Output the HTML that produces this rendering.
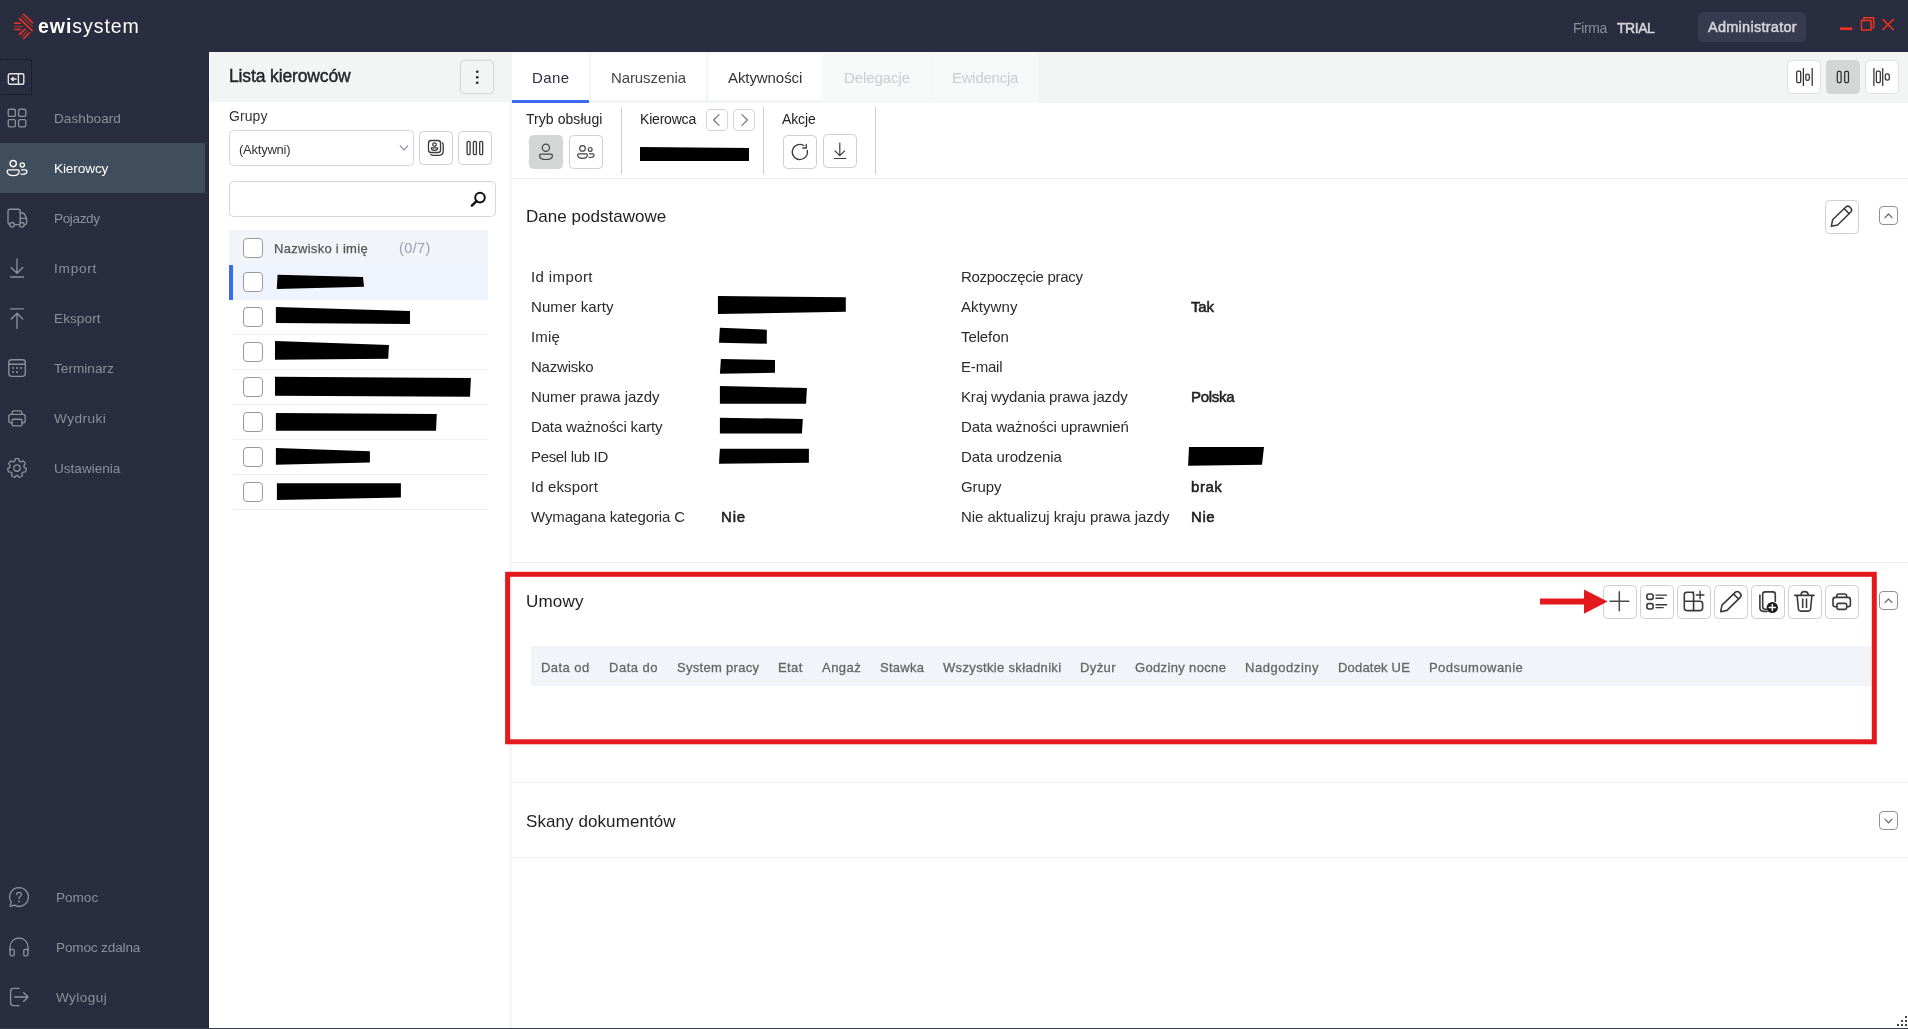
<!DOCTYPE html>
<html lang="pl">
<head>
<meta charset="utf-8">
<title>ewisystem</title>
<style>
*{box-sizing:border-box;margin:0;padding:0}
html,body{width:1908px;height:1029px;overflow:hidden;background:#fff}
body{font-family:"Liberation Sans",sans-serif;font-size:14px;color:#222;position:relative;will-change:transform}
.abs{position:absolute}
svg{display:block;overflow:visible}
#topbar{position:absolute;left:0;top:0;width:1908px;height:52px;background:#2a2c3f}
#sidebar{position:absolute;left:0;top:52px;width:209px;height:977px;background:#2a2c3f}
.nav{position:absolute;left:0;width:205px;height:50px;color:#8d8f9b;font-size:13.6px}
.nav.active{background:#3f4d5c;color:#fff}
.nav span{position:absolute;left:54px;top:0.7px;line-height:50px;white-space:nowrap}
.nav svg{position:absolute;left:5px;top:13px;width:24px;height:24px;fill:none;stroke:currentColor;stroke-width:1.35;stroke-linecap:round;stroke-linejoin:round}
.nav.b span{left:56px}
.btn{position:absolute;border:1px solid #cfcfcf;border-radius:4.5px;background:#fff}
.btn.sel{background:#d4d6d6;border-color:#d4d6d6}
.btn svg{position:absolute;left:-1px;top:-1px;width:calc(100% + 2px);height:calc(100% + 2px);fill:none;stroke:#3a3a3a;stroke-width:1.4;stroke-linecap:round;stroke-linejoin:round}
.t{position:absolute;white-space:nowrap;line-height:20px}
.hl{position:absolute;height:1px;background:#efefef}
.vl{position:absolute;width:1px;background:#efefef}
.cb{position:absolute;width:20px;height:20px;border:1px solid #9a9a9a;border-radius:4px;background:#fff}
.lab{position:absolute;white-space:nowrap;font-size:15px;line-height:20px;color:#2b2b2b}
.val{position:absolute;white-space:nowrap;font-size:15px;line-height:20px;color:#222;-webkit-text-stroke:0.55px #222}
.sb{-webkit-text-stroke:0.5px currentColor}
.th{position:absolute;white-space:nowrap;font-size:13px;line-height:20px;color:#666;top:657.5px;-webkit-text-stroke:0.3px #666}
</style>
</head>
<body>
<!-- TOPBAR -->
<div id="topbar">
  <svg class="abs" style="left:0;top:0" width="60" height="52" viewBox="0 0 60 52" fill="none" stroke-width="1.55" stroke-linecap="round">
    <g stroke="#f0321e">
      <path d="M19.5 18.6 L32.1 30.6"/><path d="M23.6 14.3 L32.4 22.6"/>
      <path d="M19.4 34.4 L25.2 29"/><path d="M23.8 38.4 L29.6 32.8"/>
      <path d="M14.7 23.3 H20.3"/><path d="M14.7 29.4 H20.3"/>
    </g>
    <g stroke="#96302a">
      <path d="M21.6 16.2 L32.4 26.5"/><path d="M21.8 36.4 L27.4 31"/><path d="M14.7 26.4 H22.7"/>
    </g>
  </svg>
  <div class="t" style="left:38px;top:11.8px;font-size:19.5px;line-height:28px;color:#fff;letter-spacing:0.95px"><b>ewi</b>system</div>
  <div class="t" style="left:1573px;top:18px;color:#8b8d97;font-size:14px;letter-spacing:-0.37px">Firma</div>
  <div class="t" style="left:1617px;top:18px;color:#d4d4d9;font-size:14px;-webkit-text-stroke:0.5px #d4d4d9;letter-spacing:-0.47px">TRIAL</div>
  <div class="abs" style="left:1698px;top:12px;width:108px;height:30px;border-radius:5px;background:#383b4f"></div>
  <div class="t" style="left:1708px;top:17px;color:#d4d4d9;font-size:14.5px;-webkit-text-stroke:0.5px #d4d4d9;letter-spacing:0.27px">Administrator</div>
  <svg class="abs" style="left:1838px;top:14px" width="60" height="20" viewBox="1838 14 60 20" fill="none" stroke="#f0321e" stroke-width="1.5">
    <path d="M1840 28.7 H1852.3" stroke-width="2.6"/>
    <path d="M1861.5 20.5 H1871 V30 H1861.5 Z"/><path d="M1864 20.5 V17.8 H1873.7 V27.5 H1871"/>
    <path d="M1882.5 19 L1893.7 30 M1893.7 19 L1882.5 30" stroke-width="1.7"/>
  </svg>
</div>
<!-- SIDEBAR -->
<div id="sidebar">
  <svg class="abs" style="left:0;top:0" width="40" height="50" viewBox="0 0 40 50" fill="none" stroke="#12131c" stroke-width="1" stroke-dasharray="1.5 1.45"><path d="M0 7.5 H31.5 V42.5 H0"/></svg>
  <svg class="abs" style="left:7px;top:21px" width="18" height="13" viewBox="0 0 18 13" fill="none" stroke="#e6e6ea" stroke-width="1.4">
    <rect x="1.3" y="0.7" width="15.5" height="10.6" rx="1.5"/><path d="M11.4 0.7 V11.3"/><path d="M9.6 6 H4.8 M6.6 4 L4.4 6 L6.6 8" stroke-width="1.5"/>
  </svg>
  <div class="nav" style="top:41px"><svg viewBox="0 0 24 24"><rect x="3.2" y="3.2" width="7.2" height="7.2" rx="1.5"/><rect x="13.6" y="3.2" width="7.2" height="7.2" rx="1.5"/><rect x="3.2" y="13.6" width="7.2" height="7.2" rx="1.5"/><rect x="13.6" y="13.6" width="7.2" height="7.2" rx="1.5"/></svg><span style="letter-spacing:0.05px">Dashboard</span></div>
  <div class="nav active" style="top:91px"><svg viewBox="0 0 24 24"><circle cx="8.2" cy="7.6" r="3.1"/><path d="M2.2 15.2 Q2.2 13.8 3.6 13.8 H12.8 Q14.2 13.8 14.2 15.2 Q14.2 19.6 8.2 19.6 Q2.2 19.6 2.2 15.2 Z"/><circle cx="17.3" cy="9" r="2.1"/><path d="M16.6 13.8 H20.6 Q21.9 13.8 21.9 15 Q21.9 18.3 17.6 18.3 Q16.6 18.3 15.9 18"/></svg><span style="letter-spacing:-0.11px">Kierowcy</span></div>
  <div class="nav" style="top:141px"><svg viewBox="0 0 24 24"><path d="M15.2 16.8 V5.2 Q15.2 3.2 13.2 3.2 H5 Q3 3.2 3 5.2 V16.6 Q3 18.4 4.6 18.6"/><path d="M9.6 18.6 H13.6"/><path d="M15.2 7 H17.6 Q19 7 19.6 8.4 L21.6 12.6 V16.8 Q21.6 18.4 20 18.6"/><path d="M15.4 12.4 H21.4"/><circle cx="7.1" cy="18.8" r="2.3"/><circle cx="16.9" cy="18.8" r="2.3"/></svg><span style="letter-spacing:-0.38px">Pojazdy</span></div>
  <div class="nav" style="top:191px"><svg viewBox="0 0 24 24"><path d="M12 2.8 V17 M6.2 11.4 L12 17.2 L17.8 11.4 M5.6 21 H18.4"/></svg><span style="letter-spacing:0.77px">Import</span></div>
  <div class="nav" style="top:241px"><svg viewBox="0 0 24 24"><path d="M12 22.4 V7.4 M6.2 13 L12 7.2 L17.8 13 M5.6 2.8 H18.4"/></svg><span style="letter-spacing:0.07px">Eksport</span></div>
  <div class="nav" style="top:291px"><svg viewBox="0 0 24 24"><rect x="3.8" y="3.7" width="16.5" height="16.6" rx="2.8"/><path d="M3.8 8.2 H20.3"/><g fill="currentColor" stroke="none"><circle cx="8" cy="12" r="1.1"/><circle cx="12" cy="12" r="1.1"/><circle cx="16" cy="12" r="1.1"/><circle cx="8" cy="16" r="1.1"/><circle cx="12" cy="16" r="1.1"/></g></svg><span style="letter-spacing:0.02px">Terminarz</span></div>
  <div class="nav" style="top:341px"><svg viewBox="0 0 24 24"><path d="M7.2 8.4 V6.6 Q7.2 4.8 9 4.8 H15 Q16.8 4.8 16.8 6.6 V8.4"/><path d="M7 16.8 H5.8 Q3.8 16.8 3.8 14.8 V10.6 Q3.8 8.4 6 8.4 H18 Q20.2 8.4 20.2 10.6 V14.8 Q20.2 16.8 18.2 16.8 H17"/><rect x="7" y="13.2" width="10" height="6.6" rx="1.5"/></svg><span style="letter-spacing:0.45px">Wydruki</span></div>
  <div class="nav" style="top:391px"><svg viewBox="0 0 24 24"><circle cx="12" cy="12" r="3.2"/><path d="M10.3 2.6 H13.7 L14.3 5.1 L15.9 5.9 L18.3 4.9 L20.4 7.6 L18.9 9.7 L19.2 11.4 L21.4 12.6 L20.6 15.9 L18 16.1 L16.9 17.5 L17.4 20 L14.3 21.5 L12.7 19.5 H11.3 L9.7 21.5 L6.6 20 L7.1 17.5 L6 16.1 L3.4 15.9 L2.6 12.6 L4.8 11.4 L5.1 9.7 L3.6 7.6 L5.7 4.9 L8.1 5.9 L9.7 5.1 Z"/></svg><span style="letter-spacing:-0.01px">Ustawienia</span></div>
  <div class="nav b" style="top:820px"><svg style="left:7px" viewBox="0 0 24 24"><path d="M12 2.6 A9.4 9.4 0 1 1 7.4 20.2 L3 21.4 L4.2 17.2 A9.4 9.4 0 0 1 12 2.6 Z"/><path d="M9.6 9.6 Q9.6 7.4 12 7.4 Q14.4 7.4 14.4 9.4 Q14.4 10.8 13 11.6 Q12 12.2 12 13.6"/><circle cx="12" cy="16.4" r="0.9" fill="currentColor" stroke="none"/></svg><span style="letter-spacing:-0.03px">Pomoc</span></div>
  <div class="nav b" style="top:870px"><svg style="left:7px" viewBox="0 0 24 24"><path d="M3 15 V12 A9 9 0 0 1 21 12 V15"/><path d="M3 14.4 H6 Q7.2 14.4 7.2 15.6 V19.6 Q7.2 20.8 6 20.8 H5 Q3 20.8 3 18.8 Z"/><path d="M21 14.4 H18 Q16.8 14.4 16.8 15.6 V19.6 Q16.8 20.8 18 20.8 H19 Q21 20.8 21 18.8 Z"/></svg><span style="letter-spacing:-0.16px">Pomoc zdalna</span></div>
  <div class="nav b" style="top:920px"><svg style="left:7px" viewBox="0 0 24 24"><path d="M12 3.4 H6.4 Q3.6 3.4 3.6 6.2 V17.8 Q3.6 20.6 6.4 20.6 H12"/><path d="M7.6 12 H21 M16.6 7.6 L21 12 L16.6 16.4"/></svg><span style="letter-spacing:0.41px">Wyloguj</span></div>
</div>

<!-- LIST PANEL -->
<div class="vl" style="left:208px;top:52px;height:977px;background:#232538"></div>
<div class="abs" style="left:210px;top:52px;width:302px;height:50px;background:#f3f5f5"></div>
<div class="t" style="left:229px;top:64.2px;font-size:17.5px;line-height:24px;color:#26262b;-webkit-text-stroke:0.45px #26262b;letter-spacing:-0.13px">Lista kierowców</div>
<div class="btn" style="left:459.8px;top:59.8px;width:34.5px;height:34.5px;background:#f3f5f5;border-color:#d6d6d6;box-shadow:0 0 2px rgba(0,0,0,0.08)"><svg viewBox="0 0 34 34"><g fill="#222" stroke="none"><circle cx="17" cy="11.6" r="1.3"/><circle cx="17" cy="17" r="1.3"/><circle cx="17" cy="22.4" r="1.3"/></g></svg></div>
<div class="t" style="left:229px;top:106px;font-size:14px;color:#333;letter-spacing:0.09px">Grupy</div>
<div class="btn" style="left:229px;top:130px;width:185px;height:36px;border-color:#d6d6d6"></div>
<div class="t" style="left:239px;top:139.6px;font-size:13px;color:#333;letter-spacing:-0.24px">(Aktywni)</div>
<svg class="abs" style="left:399px;top:144px" width="10" height="8" viewBox="0 0 10 8" fill="none" stroke="#8a90aa" stroke-width="1.2" stroke-linecap="round" stroke-linejoin="round"><path d="M1.2 1.9 L5 5.9 L8.8 1.9"/></svg>
<div class="btn" style="left:419.3px;top:131.3px;width:33.6px;height:33.6px"><svg viewBox="0 0 33.6 33.6" style="stroke-width:1.3"><rect x="9.5" y="9.5" width="12" height="12" rx="2.6"/><circle cx="15.5" cy="13.6" r="1.8"/><path d="M12.4 16.9 H18.6 V17.5 Q18.6 19.3 15.5 19.3 Q12.4 19.3 12.4 17.5 Z"/><path d="M11.6 23.4 Q12.4 24.3 13.8 24.3 H20 Q24.2 24.3 24.2 20.1 V13.9 Q24.2 12.5 23.3 11.7"/></svg></div>
<div class="btn" style="left:458.2px;top:131.3px;width:33.6px;height:33.6px"><svg viewBox="0 0 33.6 33.6" style="stroke-width:1.3"><rect x="9.1" y="10.3" width="3" height="13.4" rx="1.3"/><rect x="15.4" y="10.3" width="3" height="13.4" rx="1.3"/><rect x="21.7" y="10.3" width="3" height="13.4" rx="1.3"/></svg></div>
<div class="btn" style="left:229px;top:181px;width:267px;height:36px;border-color:#d6d6d6"></div>
<svg class="abs" style="left:470px;top:191px" width="17" height="17" viewBox="0 0 17 17" fill="none" stroke="#111" stroke-width="2"><circle cx="10" cy="6.6" r="4.8"/><path d="M6.5 10.1 L1.9 14.7" stroke-width="2.5" stroke-linecap="round"/></svg>
<div class="abs" style="left:229px;top:230px;width:259px;height:35px;background:#f3f4f9"></div>
<div class="cb" style="left:243px;top:238px"></div>
<div class="t" style="left:274px;top:238.6px;font-size:13px;color:#555;-webkit-text-stroke:0.25px #555;letter-spacing:0.29px">Nazwisko i imię</div>
<div class="t" style="left:399px;top:238px;font-size:14.5px;color:#9a9eb2;letter-spacing:0.39px">(0/7)</div>
<div class="abs" style="left:229px;top:264.5px;width:259px;height:35px;background:#eef3fe"></div>
<div class="abs" style="left:229px;top:264.5px;width:4px;height:35px;background:#3b6cf0"></div>
<div class="cb" style="left:243px;top:272px"></div>
<div class="cb" style="left:243px;top:307px"></div>
<div class="hl" style="left:233px;top:334px;width:255px"></div>
<div class="cb" style="left:243px;top:342px"></div>
<div class="hl" style="left:233px;top:369px;width:255px"></div>
<div class="cb" style="left:243px;top:377px"></div>
<div class="hl" style="left:233px;top:404px;width:255px"></div>
<div class="cb" style="left:243px;top:412px"></div>
<div class="hl" style="left:233px;top:439px;width:255px"></div>
<div class="cb" style="left:243px;top:447px"></div>
<div class="hl" style="left:233px;top:474px;width:255px"></div>
<div class="cb" style="left:243px;top:482px"></div>
<div class="hl" style="left:233px;top:509px;width:255px"></div>
<svg class="abs" style="left:0;top:0" width="1908" height="1029" viewBox="0 0 1908 1029" fill="#000">
<polygon points="277.6,274.8 363,277 364,286.7 276.8,289"/>
<polygon points="275.9,307 410,311 410,323.9 275.9,322.9"/>
<polygon points="275,341 389,345 388.2,358.7 275,359.8"/>
<polygon points="275,376.8 470.9,378.1 470,396.7 275,395.8"/>
<polygon points="275.9,413 436.8,414 436,430.7 275.9,430.7"/>
<polygon points="275.9,448.1 369.9,451.2 369.9,462.5 275.9,464.8"/>
<polygon points="276.9,483.2 400.9,483.2 400.9,497.6 276.9,499.9"/>
</svg>

<!-- MAIN PANEL -->
<div class="abs" style="left:512px;top:52px;width:1396px;height:51px;background:#f3f5f5"></div>
<div class="abs" style="left:512px;top:53px;width:77px;height:47px;background:#fff"></div>
<div class="abs" style="left:512px;top:100px;width:77px;height:3px;background:#3b6cf0"></div>
<div class="abs" style="left:590.5px;top:53px;width:115.5px;height:47px;background:#fff"></div>
<div class="abs" style="left:707.5px;top:53px;width:114.5px;height:47px;background:#fff"></div>
<div class="abs" style="left:822px;top:52px;width:216px;height:51px;background:#f7f8f8"></div>
<div class="vl" style="left:931px;top:52px;height:51px;background:#f3f4f4"></div>
<div class="t" style="left:532px;top:67.8px;font-size:15px;color:#2a2d45;letter-spacing:0.38px">Dane</div>
<div class="t" style="left:611px;top:67.8px;font-size:15px;color:#454545;letter-spacing:-0.1px">Naruszenia</div>
<div class="t" style="left:728px;top:67.8px;font-size:15px;color:#333;letter-spacing:-0.08px">Aktywności</div>
<div class="t" style="left:844px;top:67.8px;font-size:15px;color:#cbcbd2;letter-spacing:-0.08px">Delegacje</div>
<div class="t" style="left:952px;top:67.8px;font-size:15px;color:#cbcbd2;letter-spacing:-0.25px">Ewidencja</div>
<div class="btn" style="left:1787.4px;top:60.1px;width:33.4px;height:33.6px;border-color:#e0e0e0"><svg viewBox="0 0 33.4 33.6" style="stroke-width:1.25;stroke:#303030"><rect x="9.7" y="11.2" width="4" height="11.4" rx="1.3"/><path d="M16.4 8.6 V25.4"/><rect x="18.8" y="14.1" width="3.5" height="6.2" rx="1.6"/><path d="M25.2 8.6 V25.4"/></svg></div>
<div class="btn sel" style="left:1826.3px;top:60.1px;width:33.4px;height:33.6px"><svg viewBox="0 0 33.4 33.6" style="stroke-width:1.25;stroke:#303030"><rect x="11.3" y="11.4" width="3.8" height="11.2" rx="1.3"/><rect x="18.7" y="11.4" width="3.8" height="11.2" rx="1.3"/></svg></div>
<div class="btn" style="left:1865.3px;top:60.1px;width:33.4px;height:33.6px;border-color:#e0e0e0"><svg viewBox="0 0 33.4 33.6" style="stroke-width:1.25;stroke:#303030"><path d="M8.9 8.6 V25.4"/><rect x="11.4" y="11.2" width="3.9" height="11.4" rx="1.3"/><path d="M17.7 8.6 V25.4"/><rect x="20.3" y="13.8" width="4" height="6.4" rx="1.9"/></svg></div>
<!-- toolbar -->
<div class="t" style="left:526px;top:109px;font-size:14px;color:#222;letter-spacing:0.06px">Tryb obsługi</div>
<div class="btn sel" style="left:529px;top:135px;width:34px;height:34px"><svg viewBox="0 0 34 34" style="stroke-width:1.2;stroke:#454545"><circle cx="16.9" cy="12.8" r="3.6"/><path d="M10.6 20.4 Q10.6 19.2 11.8 19.2 H22.2 Q23.4 19.2 23.4 20.4 Q23.4 24.5 17 24.5 Q10.6 24.5 10.6 20.4 Z"/></svg></div>
<div class="btn" style="left:569px;top:135px;width:34px;height:34px"><svg viewBox="0 0 34 34" style="stroke-width:1.2;stroke:#454545"><circle cx="13.5" cy="13.4" r="2.8"/><path d="M8.6 19.8 Q8.6 18.8 9.6 18.8 H17.4 Q18.4 18.8 18.4 19.8 Q18.4 23.4 13.5 23.4 Q8.6 23.4 8.6 19.8 Z"/><circle cx="21.2" cy="14.4" r="1.9"/><path d="M20.6 18.8 H24 Q25 18.8 25 19.8 Q25 22.5 21.6 22.5 Q20.8 22.5 20 22.2"/></svg></div>
<div class="vl" style="left:621px;top:107px;height:67px;background:#cdcdd1"></div>
<div class="t" style="left:640px;top:109px;font-size:14px;color:#222;letter-spacing:-0.2px">Kierowca</div>
<div class="btn" style="left:706px;top:109px;width:22px;height:22px;border-radius:4px;border-color:#d6d6da"><svg viewBox="0 0 22 22" style="stroke:#74788e;stroke-width:1.2"><path d="M13.1 5.6 L7.6 11 L13.1 16.4"/></svg></div>
<div class="btn" style="left:733px;top:109px;width:22px;height:22px;border-radius:4px;border-color:#d6d6da"><svg viewBox="0 0 22 22" style="stroke:#74788e;stroke-width:1.2"><path d="M8.9 5.6 L14.4 11 L8.9 16.4"/></svg></div>
<div class="vl" style="left:763px;top:107px;height:67px;background:#cdcdd1"></div>
<div class="t" style="left:782px;top:109px;font-size:14px;color:#222;letter-spacing:-0.11px">Akcje</div>
<div class="btn" style="left:783px;top:135px;width:34px;height:34px"><svg viewBox="0 0 34 34" style="stroke-width:1.3;stroke:#3c3c3c"><path d="M24.3 15.4 A7.6 7.6 0 1 1 20.8 10.5"/><path d="M23.3 9.5 V13 H19.8"/></svg></div>
<div class="btn" style="left:823px;top:134px;width:34px;height:34px"><svg viewBox="0 0 34 34" style="stroke-width:1.2;stroke:#3c3c3c"><path d="M16.8 9.2 V21.5 M12 16.9 L16.8 21.7 L21.6 16.9 M11.2 24.5 H22.6"/></svg></div>
<div class="vl" style="left:875px;top:107px;height:67px;background:#cdcdd1"></div>
<div class="hl" style="left:512px;top:178px;width:1396px"></div>
<div class="abs" style="left:509px;top:102px;width:3px;height:926px;background:#f5f6f6"></div>
<!-- Dane podstawowe -->
<div class="t" style="left:526px;top:204.6px;font-size:17px;line-height:24px;color:#1f1f1f;letter-spacing:0.02px">Dane podstawowe</div>
<div class="btn" style="left:1825px;top:200px;width:34px;height:34px"><svg viewBox="0 0 34 34" style="stroke-width:1.5;stroke:#3a3a3a"><path d="M20.8 7 Q22.8 5.2 24.8 7 L25.8 8 Q27.6 10 25.8 12 L12.6 25 L6.3 26.3 L7.6 19.8 Z"/><path d="M19.2 8.8 L24.2 13.6"/></svg></div>
<div class="btn" style="left:1879px;top:206px;width:19px;height:19px;border-radius:4px;border-color:#919191"><svg viewBox="0 0 19 19" style="stroke:#666;stroke-width:1.2"><path d="M6 11.6 L9.5 8 L13 11.6"/></svg></div>
<div class="lab" style="left:531px;top:267px;letter-spacing:0.39px">Id import</div><div class="lab" style="left:961px;top:267px;letter-spacing:-0.3px">Rozpoczęcie pracy</div>
<div class="lab" style="left:531px;top:297px;letter-spacing:0.09px">Numer karty</div><div class="lab" style="left:961px;top:297px;letter-spacing:0.11px">Aktywny</div>
<div class="val" style="left:1191px;top:297px;letter-spacing:-0.22px">Tak</div>
<div class="lab" style="left:531px;top:327px;letter-spacing:0.15px">Imię</div><div class="lab" style="left:961px;top:327px;letter-spacing:-0.1px">Telefon</div>
<div class="lab" style="left:531px;top:357px;letter-spacing:-0.21px">Nazwisko</div><div class="lab" style="left:961px;top:357px;letter-spacing:-0.18px">E-mail</div>
<div class="lab" style="left:531px;top:387px;letter-spacing:-0.04px">Numer prawa jazdy</div><div class="lab" style="left:961px;top:387px;letter-spacing:-0.15px">Kraj wydania prawa jazdy</div>
<div class="val" style="left:1191px;top:387px;letter-spacing:-0.29px">Polska</div>
<div class="lab" style="left:531px;top:417px;letter-spacing:-0.15px">Data ważności karty</div><div class="lab" style="left:961px;top:417px;letter-spacing:-0.14px">Data ważności uprawnień</div>
<div class="lab" style="left:531px;top:447px;letter-spacing:-0.33px">Pesel lub ID</div><div class="lab" style="left:961px;top:447px;letter-spacing:-0.07px">Data urodzenia</div>
<div class="lab" style="left:531px;top:477px;letter-spacing:0.11px">Id eksport</div><div class="lab" style="left:961px;top:477px;letter-spacing:-0.11px">Grupy</div>
<div class="val" style="left:1191px;top:477px;letter-spacing:0.54px">brak</div>
<div class="lab" style="left:531px;top:507px;letter-spacing:-0.13px">Wymagana kategoria C</div><div class="lab" style="left:961px;top:507px;letter-spacing:-0.05px">Nie aktualizuj kraju prawa jazdy</div>
<div class="val" style="left:721px;top:507px;letter-spacing:0.84px">Nie</div>
<div class="val" style="left:1191px;top:507px;letter-spacing:0.59px">Nie</div>
<div class="hl" style="left:512px;top:562px;width:1396px"></div>
<!-- Umowy -->
<div class="t" style="left:526px;top:589.8px;font-size:17px;line-height:24px;color:#1f1f1f;letter-spacing:0.21px">Umowy</div>
<div class="abs" style="left:531px;top:646px;width:1342px;height:40px;background:#f3f4f9"></div>
<div class="th" style="left:541px;letter-spacing:0.46px">Data od</div><div class="th" style="left:609px;letter-spacing:0.51px">Data do</div><div class="th" style="left:677px;letter-spacing:0.3px">System pracy</div><div class="th" style="left:778px;letter-spacing:0.42px">Etat</div><div class="th" style="left:822px;letter-spacing:0.48px">Angaż</div><div class="th" style="left:880px;letter-spacing:0.25px">Stawka</div><div class="th" style="left:943px;letter-spacing:0.34px">Wszystkie składniki</div><div class="th" style="left:1080px;letter-spacing:0.41px">Dyżur</div><div class="th" style="left:1135px;letter-spacing:0.35px">Godziny nocne</div><div class="th" style="left:1245px;letter-spacing:0.55px">Nadgodziny</div><div class="th" style="left:1338px;letter-spacing:0.19px">Dodatek UE</div><div class="th" style="left:1429px;letter-spacing:0.45px">Podsumowanie</div>
<div class="btn" style="left:1603.4px;top:585.4px;width:33.4px;height:33.4px"><svg viewBox="0 0 33.4 33.4" style="stroke-width:1.6;stroke:#3a3a3a;transform:translate(0.4px,0.4px)"><path d="M15.9 6.4 V25.4 M6.6 15.9 H25.4" style="stroke-width:1.5;stroke:#4a4a4a"/></svg></div>
<div class="btn" style="left:1640.4px;top:585.4px;width:33.4px;height:33.4px"><svg viewBox="0 0 33.4 33.4" style="stroke-width:1.6;stroke:#3a3a3a;transform:translate(0.4px,0.4px)"><rect x="6.5" y="8.6" width="6.2" height="5.4" rx="1.9"/><rect x="6.5" y="18.2" width="6.2" height="5.4" rx="1.9"/><path d="M15.6 9.7 H26.2 M15.6 12.8 H22.8 M15.6 19.3 H26.2 M15.6 22.2 H22.8" style="stroke-width:1.4"/></svg></div>
<div class="btn" style="left:1677.4px;top:585.4px;width:33.4px;height:33.4px"><svg viewBox="0 0 33.4 33.4" style="stroke-width:1.6;stroke:#3a3a3a;transform:translate(0.4px,0.4px)"><path d="M16.2 6.8 H9.4 Q6.9 6.8 6.9 9.3 V22.7 Q6.9 25.2 9.4 25.2 H22.7 Q25.2 25.2 25.2 22.7 V18.3 Q25.2 15.8 22.7 15.8 H6.9 M13.8 6.8 Q16.2 6.8 16.2 9.2 V25.2"/><path d="M22.7 5.8 V13.4 M18.9 9.6 H26.5" style="stroke-width:1.4"/></svg></div>
<div class="btn" style="left:1714.4px;top:585.4px;width:33.4px;height:33.4px"><svg viewBox="0 0 33.4 33.4" style="stroke-width:1.6;stroke:#3a3a3a;transform:translate(0.4px,0.4px)"><path d="M20.8 7 Q22.8 5.2 24.8 7 L25.8 8 Q27.6 10 25.8 12 L12.6 25 L6.3 26.3 L7.6 19.8 Z"/><path d="M19.2 8.8 L24.2 13.6"/></svg></div>
<div class="btn" style="left:1751.4px;top:585.4px;width:33.4px;height:33.4px"><svg viewBox="0 0 33.4 33.4" style="stroke-width:1.6;stroke:#3a3a3a;transform:translate(0.4px,0.4px)"><path d="M23.9 16 V8.9 Q23.9 6.5 21.5 6.5 H13.7 Q11.3 6.5 11.3 8.9 V21.4 Q11.3 23.8 13.7 23.8 H15.4"/><path d="M8.5 9.6 V22.4 Q8.5 26 12.1 26 H15.6"/><circle cx="20.9" cy="22.1" r="5.6" fill="#1f1f1f" stroke="none"/><path d="M20.9 19 V25.2 M17.8 22.1 H24" stroke="#fff" stroke-width="1.4"/></svg></div>
<div class="btn" style="left:1788.4px;top:585.4px;width:33.4px;height:33.4px"><svg viewBox="0 0 33.4 33.4" style="stroke-width:1.6;stroke:#3a3a3a;transform:translate(0.4px,0.4px)"><path d="M6.4 10 H25.6 M12.6 9.8 Q12.6 6.2 16.2 6.2 Q19.8 6.2 19.8 9.8 M8.7 10.2 L10 23.4 Q10.2 25.7 12.5 25.7 H19.7 Q22 25.7 22.2 23.4 L23.5 10.2 M14.3 13.6 V22 M18.1 13.6 V22"/></svg></div>
<div class="btn" style="left:1825.4px;top:585.4px;width:33.4px;height:33.4px"><svg viewBox="0 0 33.4 33.4" style="stroke-width:1.6;stroke:#3a3a3a;transform:translate(0.4px,0.4px)"><path d="M11.4 11.4 V10.4 Q11.4 8.6 13.2 8.6 H19.4 Q21.2 8.6 21.2 10.4 V11.4"/><path d="M11.2 21.4 H9.8 Q7.6 21.4 7.6 19.2 V14.4 Q7.6 12 10 12 H22.6 Q25 12 25 14.4 V19.2 Q25 21.4 22.8 21.4 H21.6"/><rect x="11.5" y="18" width="9.8" height="6" rx="1.6"/></svg></div>
<div class="btn" style="left:1879px;top:591px;width:19px;height:19px;border-radius:4px;border-color:#919191"><svg viewBox="0 0 19 19" style="stroke:#666;stroke-width:1.2"><path d="M6 11.6 L9.5 8 L13 11.6"/></svg></div>
<div class="hl" style="left:512px;top:782px;width:1396px"></div>
<!-- Skany -->
<div class="t" style="left:526px;top:809.7px;font-size:17px;line-height:24px;color:#1f1f1f;letter-spacing:0.08px">Skany dokumentów</div>
<div class="btn" style="left:1879px;top:811px;width:19px;height:19px;border-radius:4px;border-color:#919191"><svg viewBox="0 0 19 19" style="stroke:#666;stroke-width:1.2"><path d="M6 8.2 L9.5 11.8 L13 8.2"/></svg></div>
<div class="hl" style="left:512px;top:857px;width:1396px"></div>
<!-- annotations -->
<svg class="abs" style="left:0;top:0" width="1908" height="1029" viewBox="0 0 1908 1029">
<rect x="507.6" y="574.3" width="1366.7" height="167.5" fill="none" stroke="#e4191e" stroke-width="5"/>
<path d="M1540 598.6 H1584 V589.5 L1607.6 601.5 L1584 613.8 V604.4 H1540 Z" fill="#e4191e"/>
<g fill="#000">
<polygon points="717.9,296.1 845.8,297.2 845.8,311.8 717.9,314"/>
<polygon points="719.9,327.8 766.8,329.7 766.8,343.7 719,342.8"/>
<polygon points="720.9,359 775,360 775,372.7 719.9,373.8"/>
<polygon points="719.9,386 806.9,388 806.1,403.7 719.9,403.7"/>
<polygon points="719.9,417.7 802.8,419 801.9,433.6 719.9,433.6"/>
<polygon points="719.9,448.7 808.9,448.7 808.9,462.8 719,463.7"/>
<polygon points="1189,446.9 1264,446.9 1262,464.7 1188.1,465.8"/>
<polygon points="640,147 749,148 749,161 640,161"/>
</g>
<g fill="#444"><rect x="1905" y="1016" width="2" height="2"/><rect x="1901" y="1020" width="2" height="2"/><rect x="1905" y="1020" width="2" height="2"/><rect x="1897" y="1024" width="2" height="2"/><rect x="1901" y="1024" width="2" height="2"/><rect x="1905" y="1024" width="2" height="2"/></g>
<rect x="0" y="1028" width="1908" height="1" fill="#3b3d50"/>
</svg>
</body>
</html>
